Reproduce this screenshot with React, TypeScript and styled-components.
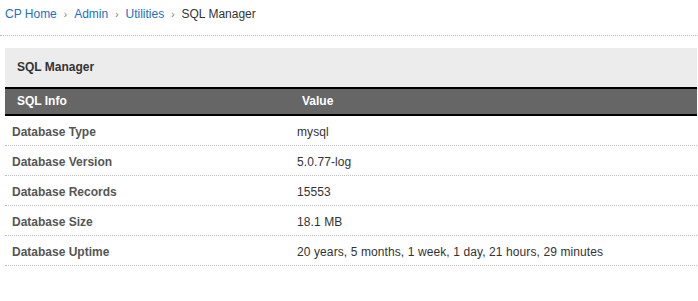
import React from 'react';
import styled, { createGlobalStyle } from 'styled-components';

const GlobalStyle = createGlobalStyle`
  body {
    margin: 0;
    background: #fff;
    font-family: 'Liberation Sans', Arial, sans-serif;
    font-size: 12px;
    color: #333;
  }
`;

type InfoRow = {
  label: string;
  value: string;
};

const ROWS: InfoRow[] = [
  { label: 'Database Type', value: 'mysql' },
  { label: 'Database Version', value: '5.0.77-log' },
  { label: 'Database Records', value: '15553' },
  { label: 'Database Size', value: '18.1 MB' },
  { label: 'Database Uptime', value: '20 years, 5 months, 1 week, 1 day, 21 hours, 29 minutes' },
];

const CRUMBS = ['CP Home', 'Admin', 'Utilities'];

const App: React.FC = () => (
  <>
    <GlobalStyle />
    <Breadcrumb>
      {CRUMBS.map((crumb) => (
        <React.Fragment key={crumb}>
          <CrumbLink href="#">{crumb}</CrumbLink>
          <Separator>›</Separator>
        </React.Fragment>
      ))}
      <Current>SQL Manager</Current>
    </Breadcrumb>

    <Panel>
      <PanelTitle>SQL Manager</PanelTitle>
      <HeaderRow>
        <HeaderCell>SQL Info</HeaderCell>
        <HeaderCell>Value</HeaderCell>
      </HeaderRow>
      {ROWS.map((row) => (
        <Row key={row.label}>
          <Label>{row.label}</Label>
          <Value>{row.value}</Value>
        </Row>
      ))}
    </Panel>
  </>
);

const Breadcrumb = styled.div`
  height: 36px;
  box-sizing: border-box;
  padding: 5px 5px 0;
  line-height: 18px;
  border-bottom: 1px dotted #bdbdbd;
`;

const CrumbLink = styled.a`
  color: #2170c4;
  text-decoration: none;
`;

const Separator = styled.span`
  display: inline-block;
  margin: 0 7px 0 7px;
  color: #777;
  font-size: 10px;
`;

const Current = styled.span`
  color: #333;
`;

const Panel = styled.div`
  margin: 12px 1px 0 5px;
`;

const PanelTitle = styled.div`
  height: 39px;
  line-height: 39px;
  padding: 0 12px;
  background: #ececec;
  font-weight: bold;
  color: #333;
`;

const HeaderRow = styled.div`
  display: grid;
  grid-template-columns: 285px 1fr;
  height: 25px;
  line-height: 25px;
  background: #666;
  border-top: 2px solid #000;
  border-bottom: 2px solid #000;
  padding: 0 12px;
`;

const HeaderCell = styled.div`
  color: #fff;
  font-weight: bold;
`;

const Row = styled.div`
  display: grid;
  grid-template-columns: 285px 1fr;
  height: 29px;
  padding: 0 7px;
  border-bottom: 1px dotted #bdbdbd;
`;

const Label = styled.div`
  padding-top: 8px;
  line-height: 16px;
  color: #555;
  font-weight: bold;
`;

const Value = styled.div`
  padding-top: 8px;
  line-height: 16px;
  color: #333;
  letter-spacing: 0.1px;
`;

export default App;
